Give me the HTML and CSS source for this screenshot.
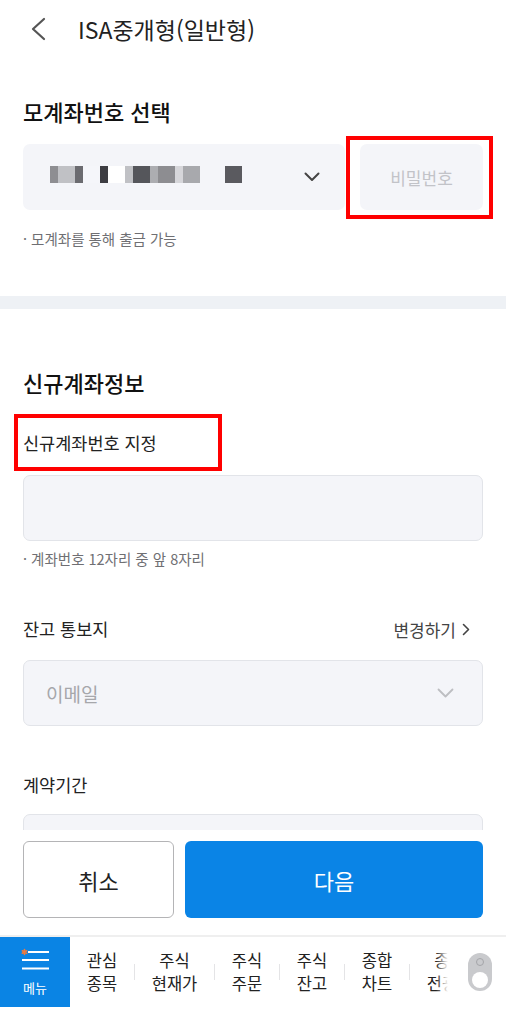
FILE: index.html
```html
<!DOCTYPE html>
<html lang="ko">
<head>
<meta charset="utf-8">
<title>ISA중개형(일반형)</title>
<link rel="stylesheet" href="styles.css">
</head>
<body>
<div class="page">
  <header class="header">
    <svg class="back" width="16" height="24" viewBox="0 0 16 24"><path d="M14 2 L3 12 L14 22" fill="none" stroke="#555" stroke-width="2.2" stroke-linecap="round" stroke-linejoin="round"/></svg>
    <h1 class="title">ISA중개형(일반형)</h1>
  </header>

  <section class="sec1">
    <h2 class="h2">모계좌번호 선택</h2>
    <div class="acct-row">
      <div class="select acct">
        <div class="blur">
          <span class="b b1"></span><span class="b b2"></span><span class="b b3"></span><span class="b b4"></span>
          <span class="b b5"></span><span class="b b6"></span><span class="b b7"></span><span class="b b8"></span>
          <span class="b b9"></span><span class="b b10"></span><span class="b b11"></span><span class="b b12"></span>
          <span class="b bgap"></span><span class="b b13"></span>
        </div>
        <svg class="chev" width="16" height="10" viewBox="0 0 16 10"><path d="M1.5 1.5 L8 8 L14.5 1.5" fill="none" stroke="#444" stroke-width="2" stroke-linecap="round" stroke-linejoin="round"/></svg>
      </div>
      <div class="hl pw-wrap">
        <div class="pw">비밀번호</div>
      </div>
    </div>
    <p class="note">· 모계좌를 통해 출금 가능</p>
  </section>

  <div class="band"></div>

  <section class="sec2">
    <h2 class="h2">신규계좌정보</h2>
    <div class="hl label-box">신규계좌번호 지정</div>
    <div class="input"></div>
    <p class="note note2">· 계좌번호 12자리 중 앞 8자리</p>

    <div class="row-between">
      <span class="label">잔고 통보지</span>
      <span class="change">변경하기 <svg width="8" height="13" viewBox="0 0 8 13"><path d="M1.5 1.5 L6.5 6.5 L1.5 11.5" fill="none" stroke="#444" stroke-width="1.6" stroke-linecap="round" stroke-linejoin="round"/></svg></span>
    </div>
    <div class="select email">
      <span class="ph">이메일</span>
      <svg class="chev" width="17" height="10" viewBox="0 0 17 10"><path d="M1.5 1.5 L8.5 8.5 L15.5 1.5" fill="none" stroke="#bdbec2" stroke-width="1.8" stroke-linecap="round" stroke-linejoin="round"/></svg>
    </div>

    <div class="label label3">계약기간</div>
    <div class="input"></div>
  </section>

  <footer class="footer">
    <div class="btns">
      <button class="btn cancel">취소</button>
      <button class="btn next">다음</button>
    </div>
    <nav class="nav">
      <div class="menu">
        <svg width="30" height="24" viewBox="0 0 30 24">
          <path d="M3.5 1.5 V6.5 M1.3 2.8 L5.7 5.2 M1.3 5.2 L5.7 2.8" stroke="#f07a3c" stroke-width="1.6" stroke-linecap="round"/>
          <rect x="7" y="3" width="21" height="2" fill="#fff"/>
          <rect x="1" y="11" width="27" height="2" fill="#fff"/>
          <rect x="1" y="19.5" width="27" height="2" fill="#fff"/>
        </svg>
        <span class="menu-txt">메뉴</span>
      </div>
      <div class="tabs">
        <div class="tab w64">관심<br>종목</div>
        <span class="div"></span>
        <div class="tab w79">주식<br>현재가</div>
        <span class="div"></span>
        <div class="tab w64">주식<br>주문</div>
        <span class="div"></span>
        <div class="tab w64">주식<br>잔고</div>
        <span class="div"></span>
        <div class="tab w64">종합<br>차트</div>
        <span class="div"></span>
        <div class="tab w79">종목<br>전광판</div>
        <span class="fade"></span>
      </div>
      <div class="toggle-wrap">
        <div class="toggle"><span class="ring"></span><span class="knob"></span></div>
      </div>
    </nav>
  </footer>
</div>
</body>
</html>
```

FILE: styles.css
```css
* { box-sizing: border-box; }
html, body { margin: 0; padding: 0; background: #fff; }
body {
  font-family: "Noto Sans CJK KR", "Noto Sans", sans-serif;
  color: #222;
  width: 506px;
}
.page { width: 506px; }

.header {
  height: 58px;
  display: flex;
  align-items: center;
  padding-left: 30px;
}
.back { display: block; }
.title {
  margin: 0 0 0 32px;
  font-size: 23px;
  font-weight: 400;
  line-height: 30px;
  color: #222;
}

.h2 {
  margin: 0;
  font-size: 22px;
  font-weight: 500;
  line-height: 31px;
  color: #111;
}

.sec1 { padding: 38px 23px 47px; }
.acct-row {
  display: flex;
  align-items: center;
  margin-top: 17px;
}
.select {
  height: 66px;
  background: #f4f5f9;
  border-radius: 7px;
  display: flex;
  align-items: center;
  justify-content: space-between;
}
.acct {
  flex: 1;
  padding: 0 25px 0 27px;
}
.blur { display: flex; height: 17px; margin-top: -5px; }
.b { display: block; height: 17px; width: 8px; }
.b1 { background: #8e8e92; }
.b2 { background: #c0c1c5; width: 17px; }
.b3 { background: #6b6b70; }
.b4 { background: #f5f6fa; width: 17px; }
.b5 { background: #3d3d42; }
.b6 { background: #ffffff; width: 17px; }
.b7 { background: #c0c1c5; }
.b8 { background: #55565b; width: 17px; }
.b9 { background: #acadb1; }
.b10 { background: #8d8d91; width: 17px; }
.b11 { background: #d6d6da; }
.b12 { background: #a8a9ad; width: 17px; }
.bgap { width: 25px; background: transparent; }
.b13 { background: #5a5a5f; width: 17px; }
.chev { display: block; }

.hl { border: 4px solid #ff0000; }
.pw-wrap {
  margin: -8px -10px -9px 1px;
  padding: 4px 6px 5px 10px;
}
.pw {
  width: 123px;
  height: 66px;
  background: #f4f5f9;
  border-radius: 7px;
  display: flex;
  align-items: center;
  justify-content: center;
  font-size: 17px;
  color: #c2c3c8;
}

.note {
  margin: 19px 0 0;
  font-size: 14.5px;
  line-height: 20px;
  color: #6f6f73;
}

.band { height: 13px; background: #eef1f5; }

.sec2 { padding: 58px 23px 0; }
.label-box {
  margin: 16px 0 0 -9px;
  width: 208px;
  height: 57px;
  padding-left: 5px;
  font-size: 17.5px;
  line-height: 49px;
  color: #222;
}
.input {
  margin-top: 4px;
  height: 66px;
  background: #f4f5f9;
  border: 1px solid #e2e4e9;
  border-radius: 7px;
}
.note2 { margin-top: 8px; }

.row-between {
  margin-top: 48px;
  display: flex;
  justify-content: space-between;
  align-items: center;
  height: 24px;
}
.label {
  font-size: 17.5px;
  line-height: 24px;
  color: #222;
}
.change {
  font-size: 17px;
  color: #444;
  display: flex;
  align-items: center;
  gap: 6px;
  padding-right: 13px;
}
.email {
  margin-top: 19px;
  border: 1px solid #e2e4e9;
  padding: 0 28px 0 22px;
}
.ph { font-size: 19px; color: #a6a7ab; }
.label3 { display: block; margin-top: 47px; }
.label3 + .input { margin-top: 17px; }

.footer {
  position: fixed;
  left: 0;
  bottom: 0;
  width: 506px;
  height: 186px;
  background: #fff;
}
.btns {
  display: flex;
  gap: 11px;
  padding: 11px 23px 0;
  height: 105px;
}
.btn {
  font-family: inherit;
  font-size: 22px;
  height: 77px;
  border-radius: 6px;
  margin: 0;
  cursor: pointer;
}
.cancel {
  width: 151px;
  background: #fff;
  border: 1px solid #b4b4b6;
  color: #222;
}
.next {
  flex: 1;
  background: #0a84e6;
  border: none;
  color: #fff;
}
.nav {
  border-top: 2px solid #efefef;
  height: 72px;
  display: flex;
}
.menu {
  width: 70px;
  height: 70px;
  background: #0a84e4;
  display: flex;
  flex-direction: column;
  align-items: center;
  padding-top: 11px;
}
.menu svg { display: block; margin-left: 1px; }
.menu-txt {
  font-size: 13px;
  line-height: 18px;
  color: #fff;
  margin-top: 7px;
}
.tabs {
  position: relative;
  width: 378px;
  height: 70px;
  overflow: hidden;
  display: flex;
  align-items: center;
  flex-shrink: 0;
}
.tab {
  flex-shrink: 0;
  text-align: center;
  font-size: 16.5px;
  line-height: 23px;
  color: #222;
}
.w64 { width: 64px; }
.w79 { width: 79px; }
.div {
  flex-shrink: 0;
  width: 1px;
  height: 16px;
  background: #e4e4e6;
}
.fade {
  position: absolute;
  right: 0;
  top: 0;
  width: 12px;
  height: 70px;
  background: linear-gradient(90deg, rgba(255,255,255,0), #fff);
}
.toggle-wrap {
  flex: 1;
  display: flex;
  align-items: center;
  padding-left: 20px;
}
.toggle {
  position: relative;
  width: 24px;
  height: 38px;
  border-radius: 12px;
  background: #c9cacd;
}
.ring {
  position: absolute;
  left: 8px;
  top: 5px;
  width: 8px;
  height: 8px;
  border-radius: 50%;
  border: 1px solid #a4a5a9;
}
.knob {
  position: absolute;
  left: 4px;
  bottom: 3px;
  width: 16px;
  height: 16px;
  border-radius: 50%;
  background: #fff;
}
```
